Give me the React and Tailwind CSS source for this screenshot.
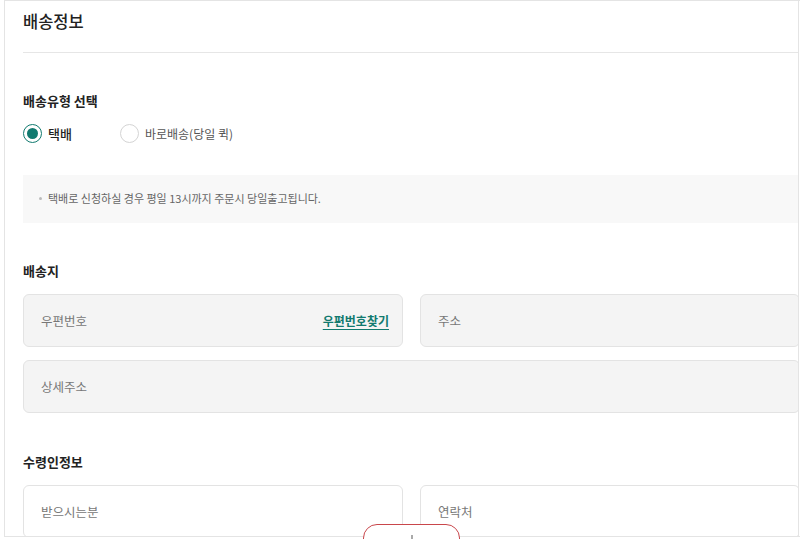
import React, { useState } from 'react';

const font = { fontFamily: '"Noto Sans CJK KR", "Noto Sans", sans-serif' };

const Radio = ({ checked, label, onClick }) => (
  <button type="button" onClick={onClick} className="flex items-center gap-[6px]">
    <span
      className={`w-[19px] h-[19px] rounded-full border flex items-center justify-center ${
        checked ? 'border-[#117a6f] border-[1.5px]' : 'border-[#d4d4d4]'
      }`}
    >
      {checked && <span className="w-[11px] h-[11px] rounded-full bg-[#117a6f]" />}
    </span>
    <span className={`${checked ? 'text-[13px] text-[#222] font-medium' : 'text-[12px] text-[#555]'}`}>{label}</span>
  </button>
);

const Field = ({ label, filled = true, children }) => (
  <div
    className={`h-[53px] rounded-[6px] border border-[#e3e3e3] flex items-center justify-between pl-[17px] pr-[13px] pt-[2px] ${
      filled ? 'bg-[#f4f4f4]' : 'bg-white'
    }`}
  >
    <span className="text-[12.5px] text-[#777]">{label}</span>
    {children}
  </div>
);

const App = () => {
  const [type, setType] = useState('parcel');

  return (
    <div className="w-[800px] h-[539px] overflow-hidden relative bg-white" style={font}>
      <div className="ml-[4px] w-[796px] h-[537px] border-l border-t border-b border-[#e4e4e4] pl-[18px] overflow-hidden relative">
        <h1 className="text-[16.5px] font-medium text-[#222] pt-[8px] h-[51px]">배송정보</h1>
        <div className="border-t border-[#e6e6e6]" />

        <h2 className="text-[13px] font-bold text-[#222] mt-[39px] leading-[18px]">배송유형 선택</h2>
        <div className="flex items-center gap-[48px] mt-[14px]">
          <Radio checked={type === 'parcel'} label="택배" onClick={() => setType('parcel')} />
          <Radio checked={type === 'quick'} label="바로배송(당일 퀵)" onClick={() => setType('quick')} />
        </div>

        <div className="mt-[31px] h-[48px] bg-[#f8f8f8] flex items-center pl-[16px] gap-[6px]">
          <span className="w-[3px] h-[3px] rounded-full bg-[#bbb]" />
          <span className="text-[11px] text-[#666]">택배로 신청하실 경우 평일 13시까지 주문시 당일출고됩니다.</span>
        </div>

        <h2 className="text-[13px] font-bold text-[#222] mt-[39px] leading-[18px]">배송지</h2>
        <div className="w-[777px] grid grid-cols-2 gap-[17px] mt-[14px]">
          <Field label="우편번호">
            <a href="#" className="text-[12px] font-bold text-[#117a6f] underline underline-offset-[3px]">
              우편번호찾기
            </a>
          </Field>
          <Field label="주소" />
        </div>
        <div className="w-[777px] mt-[13px]">
          <Field label="상세주소" />
        </div>

        <h2 className="text-[13px] font-bold text-[#222] mt-[40px] leading-[18px]">수령인정보</h2>
        <div className="w-[777px] grid grid-cols-2 gap-[17px] mt-[14px]">
          <Field label="받으시는분" filled={false} />
          <Field label="연락처" filled={false} />
        </div>

        <div className="absolute right-0 top-0 bottom-0 w-[2px] border-l border-[#e4e4e4] bg-white" />
      </div>

      <div className="absolute left-[363px] top-[524px] w-[97px] h-[30px] rounded-[14px] border border-[#c9464b] bg-white flex justify-center pt-[10px]">
        <span className="w-[2px] h-[4px] bg-[#aaa]" />
      </div>
    </div>
  );
};

export default App;
